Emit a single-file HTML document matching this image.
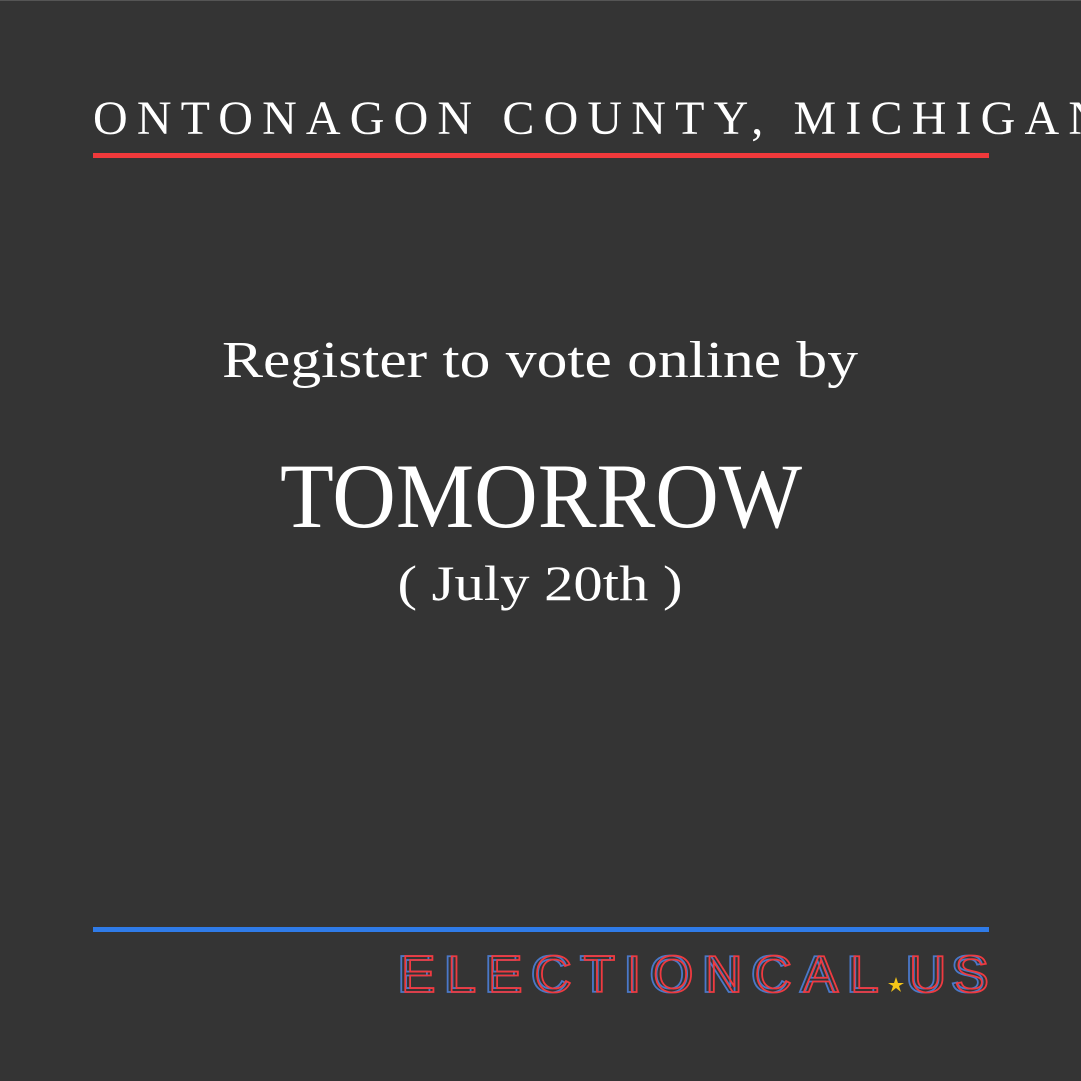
<!DOCTYPE html>
<html><head><meta charset="utf-8"><style>
html,body{margin:0;padding:0;background:#333;}
body{width:1081px;height:1081px;overflow:hidden;position:relative;}
svg{position:absolute;left:0;top:0;}
</style></head><body>
<svg width="1081" height="1081" viewBox="0 0 1081 1081">
<rect width="1081" height="1081" fill="#343434"/>
<rect x="0" y="0" width="1081" height="1" fill="#555"/>
<text x="93" y="134" font-family="Liberation Serif, serif" font-size="48" fill="#fff" textLength="1010" lengthAdjust="spacing">ONTONAGON COUNTY, MICHIGAN</text>
<rect x="93" y="153" width="896" height="5" fill="#f0393b"/>
<text x="540" y="377" text-anchor="middle" font-family="Liberation Serif, serif" font-size="52" fill="#fff" textLength="636" lengthAdjust="spacingAndGlyphs">Register to vote online by</text>
<text x="541" y="527" text-anchor="middle" font-family="Liberation Serif, serif" font-size="92" fill="#fff" textLength="522" lengthAdjust="spacingAndGlyphs">TOMORROW</text>
<text x="540" y="600" text-anchor="middle" font-family="Liberation Serif, serif" font-size="50" fill="#fff" textLength="285" lengthAdjust="spacingAndGlyphs">( July 20th )</text>
<rect x="93" y="927" width="896" height="5" fill="#2f7be8"/>
<g font-family="Liberation Sans, sans-serif" font-size="52" fill="none" stroke-width="1.8">
<text x="397" y="992" stroke="#4a78c8" textLength="478" lengthAdjust="spacing">ELECTIONCAL</text>
<text x="401" y="992" stroke="#ef3a40" textLength="478" lengthAdjust="spacing">ELECTIONCAL</text>
<text x="905" y="992" stroke="#4a78c8" textLength="80" lengthAdjust="spacing">US</text>
<text x="909" y="992" stroke="#ef3a40" textLength="80" lengthAdjust="spacing">US</text>
</g>
<polygon points="896,977 898,983 904,983 899,986 901,992 896,988 891,992 893,986 888,983 894,983" fill="#f5c518"/>
</svg>
</body></html>
